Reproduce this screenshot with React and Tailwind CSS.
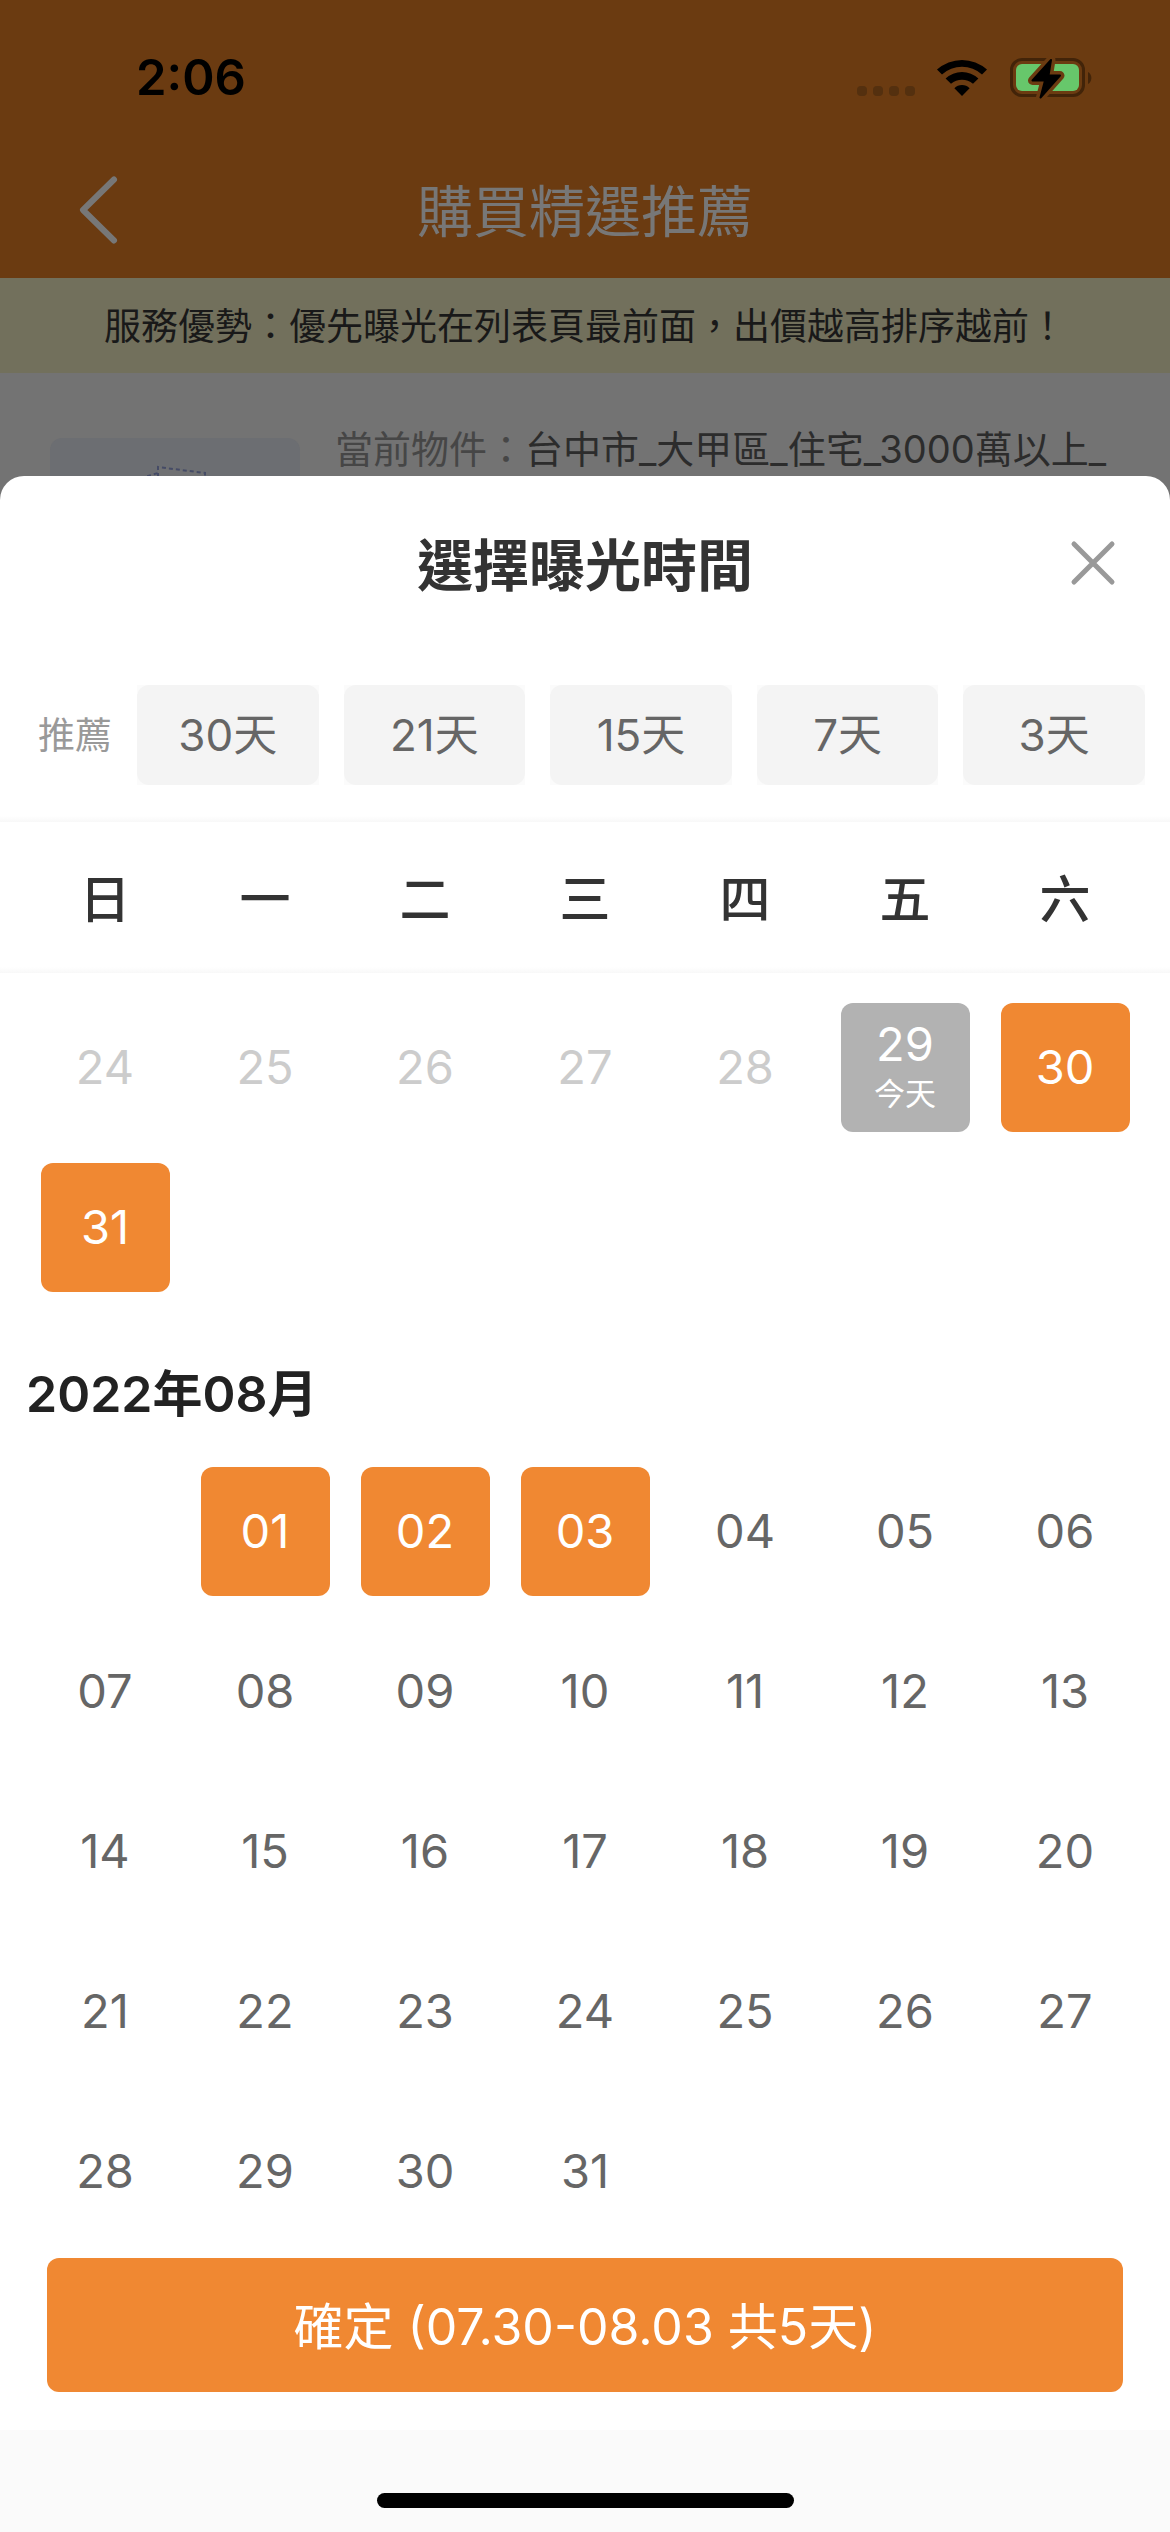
const WEEKDAYS = ["日", "一", "二", "三", "四", "五", "六"];
const PRESETS = [30, 21, 15, 7, 3];

const JULY = [
  ...["24", "25", "26", "27", "28"].map((day) => ({ day, state: "past" })),
  { day: "29", state: "today" },
  { day: "30", state: "selected" },
  { day: "31", state: "selected" },
];

const AUGUST = [
  null,
  ...Array.from({ length: 31 }, (_, i) => ({
    day: String(i + 1).padStart(2, "0"),
    state: i < 3 ? "selected" : "open",
  })),
];

const DAY_STYLES = {
  past: "text-[#cccccc]",
  today: "bg-[#b2b2b2] text-white",
  selected: "bg-[#f08832] text-white",
  open: "text-[#666666]",
};

const BOLT = "M43 4 L24.5 24.5 H37 L32.5 41.5 L52 19.5 H40.5 Z";

function StatusIcons() {
  return (
    <div className="flex items-center">
      <svg className="h-[44px] w-[60px]" viewBox="0 0 60 44" aria-hidden="true">
        {[0, 16, 32, 48].map((x) => (
          <rect key={x} x={x + 1} y="30" width="10" height="10" rx="4" fill="#54300f" />
        ))}
      </svg>
      <svg className="ml-5 h-[44px] w-[52px]" viewBox="0 0 52 44" aria-hidden="true">
        <path d="M6 18.5 A30 30 0 0 1 46 18.5 L51 13.6 A37 37 0 0 0 1 13.6 Z" fill="#000" />
        <path d="M15 27.8 A17 17 0 0 1 37 27.8 L42.4 22.6 A24 24 0 0 0 9.6 22.6 Z" fill="#000" />
        <path d="M26 40 L33.6 32.2 A10.8 10.8 0 0 0 18.4 32.2 Z" fill="#000" />
      </svg>
      <svg className="ml-5 h-[44px] w-[86px]" viewBox="0 0 86 44" aria-hidden="true">
        <rect x="3.5" y="3.5" width="72" height="36" rx="10.5" fill="none" stroke="#422409" strokeWidth="3" />
        <rect x="8" y="8" width="63" height="27" rx="6" fill="#67c76b" />
        <path d="M80 16 a7 7 0 0 1 0 12 Z" fill="#422409" />
        <path d={BOLT} fill="#000" stroke="#6b3b11" strokeWidth="9" strokeLinejoin="round" />
        <path d={BOLT} fill="#000" stroke="#000" strokeWidth="2" strokeLinejoin="round" />
      </svg>
    </div>
  );
}

function Day({ day, state }) {
  return (
    <div className="flex h-40 items-center justify-center">
      <button
        type="button"
        disabled={state === "past"}
        className={`flex size-[129px] flex-col items-center justify-center rounded-xl text-[47px] leading-[54px] ${DAY_STYLES[state]}`}
      >
        {day}
        {state === "today" && <span className="text-[31px] leading-[46px]">今天</span>}
      </button>
    </div>
  );
}

function Month({ days }) {
  return (
    <div className="grid grid-cols-7 px-[25px]">
      {days.map((d, i) => (d ? <Day key={i} {...d} /> : <div key={i} />))}
    </div>
  );
}

function Divider() {
  return <div className="h-1.5 bg-linear-to-b from-white to-[#f8f8f8]" />;
}

export default function App() {
  return (
    <div className="flex min-h-screen flex-col bg-[#737373] font-['Inter','Noto_Sans_CJK_TC',sans-serif]">
      <header className="bg-[#6b3b11]">
        <div className="flex h-[156px] items-center justify-between pr-[76px] pl-[136px]">
          <time className="text-[49px] font-semibold text-black">2:06</time>
          <StatusIcons />
        </div>
        <div className="grid h-[122px] grid-cols-[1fr_auto_1fr] items-start px-[72px]">
          <button type="button" aria-label="返回" className="mt-[14px] w-fit">
            <svg className="h-[80px] w-[52px]" viewBox="0 0 52 80" fill="none" aria-hidden="true">
              <path d="M42 9.5 L11 40 L42 70.5" stroke="#777777" strokeWidth="6" strokeLinecap="round" strokeLinejoin="round" />
            </svg>
          </button>
          <h1 className="mt-[14px] text-[56px] leading-[84px] text-[#777777]">購買精選推薦</h1>
        </div>
      </header>

      <p className="flex h-[95px] items-center justify-center bg-[#72705c] pt-0.5 text-[37px] whitespace-nowrap text-[#191919]">
        服務優勢：優先曝光在列表頁最前面，出價越高排序越前！
      </p>

      <section className="flex h-[103px] gap-[35px] overflow-hidden px-[50px]">
        <div className="mt-[65px] h-[188px] w-[250px] shrink-0 rounded-xl bg-[#6c6e72]">
          <svg className="h-[188px] w-[250px]" viewBox="0 0 250 188" fill="none" aria-hidden="true">
            <path
              d="M98 60 V38 L108 35 M108 60 V29 L155 35 V60"
              fill="#707173"
              stroke="#454b66"
              strokeWidth="2"
              strokeDasharray="4 3"
            />
          </svg>
        </div>
        <p className="mt-12 text-[38px] leading-[56px] whitespace-nowrap text-[#2c2c2c]">
          <span className="text-[#464646]">當前物件：</span>台中市_大甲區_住宅_3000萬以上_
        </p>
      </section>

      <main className="flex flex-1 flex-col rounded-t-3xl bg-white">
        <div className="grid h-[209px] grid-cols-[1fr_auto_1fr] items-start px-[50px] pt-12">
          <h2 className="col-start-2 text-[56px] leading-[84px] font-bold text-[#333333]">選擇曝光時間</h2>
          <button type="button" aria-label="關閉" className="mt-3 justify-self-end">
            <svg className="size-[56px]" viewBox="0 0 56 56" fill="none" aria-hidden="true">
              <path d="M10 8 L48 46 M48 8 L10 46" stroke="#999999" strokeWidth="5" strokeLinecap="round" />
            </svg>
          </button>
        </div>

        <div className="flex h-[131px] items-start pr-[25px] pl-[38px]">
          <span className="w-[99px] text-[37px] leading-[102px] text-[#999999]">推薦</span>
          <div className="grid flex-1 grid-cols-5 gap-[25px]">
            {PRESETS.map((n) => (
              <div key={n} className="bg-[#fbfbfb]">
                <button type="button" className="block h-[100px] w-full rounded-xl bg-[#f4f4f4] text-[44px] text-[#666666]">
                  {n}天
                </button>
              </div>
            ))}
          </div>
        </div>
        <Divider />

        <div className="grid h-[145px] grid-cols-7 items-center px-[25px] pt-3 text-center text-[51px] font-medium text-[#333333]">
          {WEEKDAYS.map((w) => (
            <span key={w}>{w}</span>
          ))}
        </div>
        <Divider />

        <div className="pt-[14px]">
          <Month days={JULY} />
          <h3 className="px-[26px] pt-[50px] pb-[20px] text-[50px] leading-[74px] font-semibold text-[#222222]">
            2022年08月
          </h3>
          <Month days={AUGUST} />
        </div>

        <div className="px-[47px] pt-[7px] pb-[38px]">
          <button type="button" className="h-[134px] w-full rounded-xl bg-[#f08832] pt-1 text-[50px] text-white">
            確定 (07.30-08.03 共5天)
          </button>
        </div>

        <footer className="flex flex-1 items-end justify-center bg-[#fafafa] pt-[63px] pb-6">
          <div className="h-[15px] w-[417px] rounded-full bg-black" />
        </footer>
      </main>
    </div>
  );
}
